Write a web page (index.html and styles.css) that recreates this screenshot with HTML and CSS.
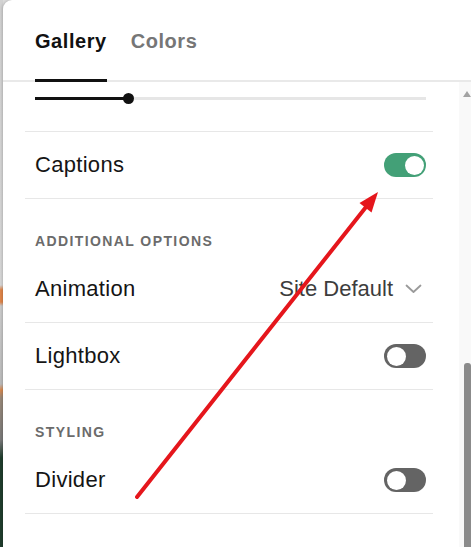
FILE: index.html
```html
<!DOCTYPE html>
<html>
<head>
<meta charset="utf-8">
<title>Gallery settings</title>
<link rel="stylesheet" href="styles.css">
</head>
<body>
<div class="page">
  <div class="backdrop"></div>
  <div class="panel">
    <div class="tabs">
      <div class="tab active">Gallery</div>
      <div class="tab">Colors</div>
    </div>
    <div class="body">
      <div class="content">
        <div class="slider-row">
          <div class="slider">
            <div class="fill" style="width:94px"></div>
            <div class="slider-thumb"></div>
          </div>
        </div>
        <div class="row">
          <span class="label">Captions</span>
          <span class="toggle on"><span class="knob"></span></span>
        </div>
        <div class="section">ADDITIONAL OPTIONS</div>
        <div class="row">
          <span class="label">Animation</span>
          <span class="value">Site Default
            <svg class="chevron" width="17" height="10" viewBox="0 0 17 10"><path d="M1.5 1.5 L8.5 8 L15.5 1.5" fill="none" stroke="#9a9a9a" stroke-width="1.8" stroke-linecap="round" stroke-linejoin="round"/></svg>
          </span>
        </div>
        <div class="row">
          <span class="label">Lightbox</span>
          <span class="toggle"><span class="knob"></span></span>
        </div>
        <div class="section">STYLING</div>
        <div class="row">
          <span class="label">Divider</span>
          <span class="toggle"><span class="knob"></span></span>
        </div>
      </div>
      <div class="scrollbar">
        <div class="sb-arrow"></div>
        <div class="sb-thumb"></div>
      </div>
    </div>
  </div>
  <svg class="annotation" width="471" height="547" viewBox="0 0 471 547">
    <line x1="137" y1="497" x2="366" y2="207" stroke="#e5161c" stroke-width="4" stroke-linecap="round"/>
    <polygon points="378,192 371.5,212.5 359.5,203" fill="#e5161c"/>
  </svg>
</div>
</body>
</html>
```

FILE: styles.css
```css
html, body {
  margin: 0;
  padding: 0;
}

body {
  font-family: "Liberation Sans", Arial, sans-serif;
  background: #dcdcdc;
  overflow: hidden;
}

.page {
  position: relative;
  display: flex;
  width: 471px;
  height: 547px;
}

.backdrop {
  flex: none;
  width: 3px;
  background: linear-gradient(to bottom,
    #d2d2d2 0px, #d9d9d9 285px,
    #e2874a 290px, #e2874a 302px,
    #cdcdcd 306px, #bdbdbd 384px,
    #d98a50 390px, #9a8a7a 398px,
    #7a7a7a 440px, #1f3d2d 458px, #1f3d2d 547px);
}

.panel {
  flex: 1;
  min-width: 0;
  display: flex;
  flex-direction: column;
  background: #fff;
  border-top-left-radius: 9px;
  box-shadow: -1px 0 3px rgba(0, 0, 0, 0.18);
}

.tabs {
  flex: none;
  height: 80px;
  border-bottom: 2px solid #e9e9e9;
  display: flex;
  align-items: flex-end;
  gap: 24px;
  padding-left: 32px;
}

.tab {
  font-size: 20px;
  font-weight: 700;
  line-height: 24px;
  letter-spacing: 0.55px;
  color: #767676;
  padding-bottom: 26px;
  border-bottom: 3px solid transparent;
  margin-bottom: -2px;
}

.tab.active {
  color: #111;
  border-bottom-color: #111;
}

.body {
  flex: 1;
  min-height: 0;
  display: flex;
}

.content {
  flex: 1;
  min-width: 0;
  padding-left: 22px;
  padding-right: 26px;
}

.slider-row {
  height: 34px;
  padding: 15px 7px 0 10px;
  border-bottom: 1px solid #e7e7e7;
}

.slider {
  position: relative;
  height: 3px;
  background: #e6e6e6;
}

.fill {
  height: 3px;
  background: #111;
}

.slider-thumb {
  position: absolute;
  left: 88px;
  top: -4px;
  width: 11px;
  height: 11px;
  border-radius: 50%;
  background: #111;
}

.row {
  height: 66px;
  border-bottom: 1px solid #e7e7e7;
  display: flex;
  align-items: center;
  justify-content: space-between;
  padding: 0 7px 0 10px;
}

.label {
  font-size: 22px;
  letter-spacing: 0.3px;
  color: #151515;
}

.value {
  display: flex;
  align-items: center;
  gap: 12px;
  padding-right: 4px;
  font-size: 22px;
  color: #3d3d3d;
}

.chevron {
  display: block;
}

.section {
  padding: 34px 0 7px 10px;
  font-size: 14px;
  line-height: 16px;
  font-weight: 700;
  letter-spacing: 1.4px;
  color: #6b6b6b;
}

.toggle {
  box-sizing: border-box;
  width: 42px;
  height: 24px;
  border-radius: 12px;
  padding: 0 2.5px;
  background: #646464;
  display: flex;
  align-items: center;
  justify-content: flex-start;
}

.toggle.on {
  background: #43a077;
  justify-content: flex-end;
}

.knob {
  width: 19px;
  height: 19px;
  border-radius: 50%;
  background: #fff;
}

.scrollbar {
  flex: none;
  width: 12px;
  background: #f9f9f9;
  display: flex;
  flex-direction: column;
}

.sb-arrow {
  width: 0;
  height: 0;
  margin: 9px 0 0 4px;
  border-left: 4px solid transparent;
  border-right: 4px solid transparent;
  border-bottom: 6px solid #a3a3a3;
}

.sb-thumb {
  margin-top: auto;
  margin-left: 5px;
  width: 7px;
  height: 184px;
  background: #8b8b8b;
  border-radius: 3px 3px 0 0;
}

.annotation {
  position: absolute;
  left: 0;
  top: 0;
  pointer-events: none;
}
```
